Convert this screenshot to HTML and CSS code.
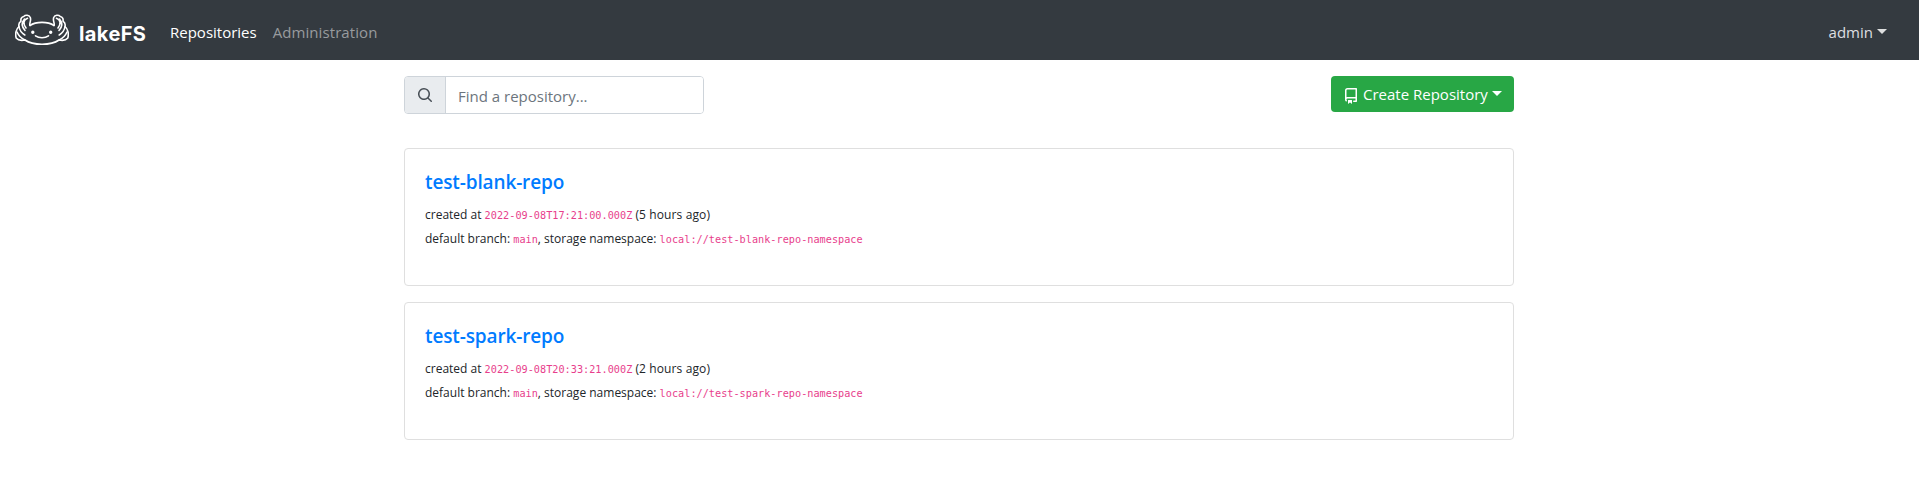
FILE: index.html
```html
<!DOCTYPE html>
<html lang="en">
<head>
<meta charset="utf-8">
<title>lakeFS</title>
<link rel="stylesheet" href="styles.css">
</head>
<body>
<header class="navbar">
  <a class="brand">
    <svg class="brand-mark" viewBox="0 0 54 32" width="54" height="32" fill="none" stroke="#fff" stroke-width="1.6" stroke-linecap="round" stroke-linejoin="round">
      <path d="M15 11.500C21 7.300 33 7.300 39 11.500"/>
      <path d="M15 11.500C14 9.500 16.500 6.500 15.300 3.500C14 .8 10.500.7 8.700 2.500C6.500 2.800 5.500 5 6 7.200C4 8.500 3.500 10.500 4 12.500C1 15 0 20 1.200 24C3 26.300 6 26.800 10 26C18 31.700 36 31.700 44 26C48 26.800 51 26.300 52.800 24C54 20 53 15 50 12.500C50.500 10.500 50 8.500 48 7.200C48.500 5 47.500 2.800 45.300 2.500C43.500.7 40 .8 38.700 3.500C37.500 6.500 40 9.500 39 11.500"/>
      <path d="M12.500 4.300C8.500 6 7.700 9.500 11 14M9.500 5C6 9 6.500 12.500 10 16.500M4 12.500C4.500 16 6.500 19 9.800 21M2 18C3.500 21.500 6 24.500 10 26"/>
      <path d="M41.500 4.300C45.500 6 46.300 9.500 43 14M44.500 5C48 9 47.500 12.500 44 16.500M50 12.500C49.500 16 47.500 19 44.200 21M52 18C50.500 21.500 48 24.500 44 26"/>
      <path d="M20.500 21.800C24 24.400 30 24.400 33.500 21.800"/>
      <circle cx="17.800" cy="18.300" r=".9" fill="#fff"/><circle cx="35.700" cy="18.300" r=".9" fill="#fff"/>
    </svg>
    <span class="brand-name">lakeFS</span>
  </a>
  <nav class="nav">
    <a class="nav-link active">Repositories</a>
    <a class="nav-link admin-link">Administration</a>
  </nav>
  <a class="user-menu"><span>admin</span><i class="caret"></i></a>
</header>
<main class="container">
  <div class="toolbar">
    <div class="search">
      <span class="search-icon">
        <svg viewBox="0 0 16 16" width="16" height="16" fill="#495057"><path fill-rule="evenodd" d="M11.500 7a4.499 4.499 0 11-8.998 0A4.499 4.499 0 0111.500 7zm-.82 4.740a6 6 0 111.060-1.060l3.040 3.040a.75.75 0 11-1.060 1.060l-3.040-3.040z"/></svg>
      </span>
      <input class="search-input" type="text" placeholder="Find a repository...">
    </div>
    <button class="create" type="button">
      <svg class="repo-icon" viewBox="0 0 16 16" width="16" height="16" fill="#fff"><path fill-rule="evenodd" d="M2 2.500A2.500 2.500 0 014.500 0h8.750a.75.75 0 01.75.75v12.500a.75.75 0 01-.75.75h-2.500a.75.75 0 110-1.500h1.750v-2h-8a1 1 0 00-.714 1.700.75.75 0 01-1.072 1.050A2.495 2.495 0 012 11.500v-9zm10.500-1V9h-8c-.356 0-.694.074-1 .208V2.500a1 1 0 011-1h8zM5 12.250v3.250a.25.25 0 00.4.2l1.450-1.087a.25.25 0 01.3 0L8.600 15.700a.25.25 0 00.4-.2v-3.250a.25.25 0 00-.25-.25h-3.500a.25.25 0 00-.25.25z"/></svg>
      <span class="create-label">Create Repository</span><i class="caret"></i>
    </button>
  </div>
  <section class="cards">
    <article class="card">
      <h5 class="title">test-blank-repo</h5>
      <p class="meta"><span>created at</span> <code>2022-09-08T17:21:00.000Z</code> <span class="age">(5 hours ago)</span></p>
      <p class="meta"><span>default branch:</span> <code>main</code><span>, storage namespace:</span> <code>local://test-blank-repo-namespace</code></p>
    </article>
    <article class="card">
      <h5 class="title">test-spark-repo</h5>
      <p class="meta"><span>created at</span> <code>2022-09-08T20:33:21.000Z</code> <span class="age">(2 hours ago)</span></p>
      <p class="meta"><span>default branch:</span> <code>main</code><span>, storage namespace:</span> <code>local://test-spark-repo-namespace</code></p>
    </article>
  </section>
</main>
</body>
</html>
```
FILE: styles.css
```css
* { box-sizing: border-box; }
body { margin: 0; background: #fff; color: #212529; font-family: "Open Sans", "Noto Sans", sans-serif; font-size: 15px; line-height: 24px; }
.navbar { display: flex; align-items: center; height: 60px; padding: 4px 32px 0 15px; background: #343a40; }
.brand { display: flex; align-items: center; gap: 10px; width: 155px; height: 56px; color: #fff; }
.brand-mark { flex: none; margin-top: -4px; }
.brand-name { font: 700 20px/24px Inter, sans-serif; letter-spacing: 0.4px; margin-top: 3px; }
.nav { display: flex; gap: 16px; }
.nav-link { color: #989b9e; }
.nav-link.active { color: #fff; }
.admin-link { letter-spacing: 0.08px; }
.user-menu { display: flex; align-items: center; gap: 4px; margin-left: auto; color: #dedfe0; }
.caret { width: 0; height: 0; border: 5px solid transparent; border-top-color: currentColor; border-bottom: 0; margin-top: -2px; }
.container { width: 1110px; margin: 16px auto 0 404px; }
.toolbar { display: flex; justify-content: space-between; align-items: flex-start; height: 38px; }
.search { display: flex; width: 300px; height: 38px; border: 1px solid #ced4da; border-radius: 4px; overflow: hidden; }
.search-icon { display: flex; align-items: center; justify-content: center; flex: 0 0 41px; background: #e9ecef; border-right: 1px solid #ced4da; }
.search-input { flex: 1; min-width: 0; border: 0; padding: 2px 12px 0; font: inherit; color: #495057; outline: 0; }
.search-input::placeholder { color: #6c757d; opacity: 1; }
.create { display: flex; align-items: center; width: 183px; height: 36px; padding: 0 12px; border: 0; border-radius: 4px; background: #28a745; color: #fff; font: inherit; white-space: nowrap; }
.repo-icon { flex: none; margin: 3px 4px 0 0; }
.create .caret { margin-left: auto; }
.cards { display: grid; gap: 16px; margin-top: 34px; }
.card { height: 138px; padding: 21px 20px; border: 1px solid #dfdfdf; border-radius: 4px; }
.title { margin: 0 0 9px; color: #007bff; font-size: 19px; font-weight: 600; line-height: 24px; letter-spacing: -0.13px; }
.meta { margin: 0; font-size: 12px; line-height: 24px; white-space: nowrap; }
.age { letter-spacing: 0.12px; }
code { color: #e83e8c; font: 10.2px/18px "DejaVu Sans Mono", monospace; letter-spacing: 0.02px; }
```
